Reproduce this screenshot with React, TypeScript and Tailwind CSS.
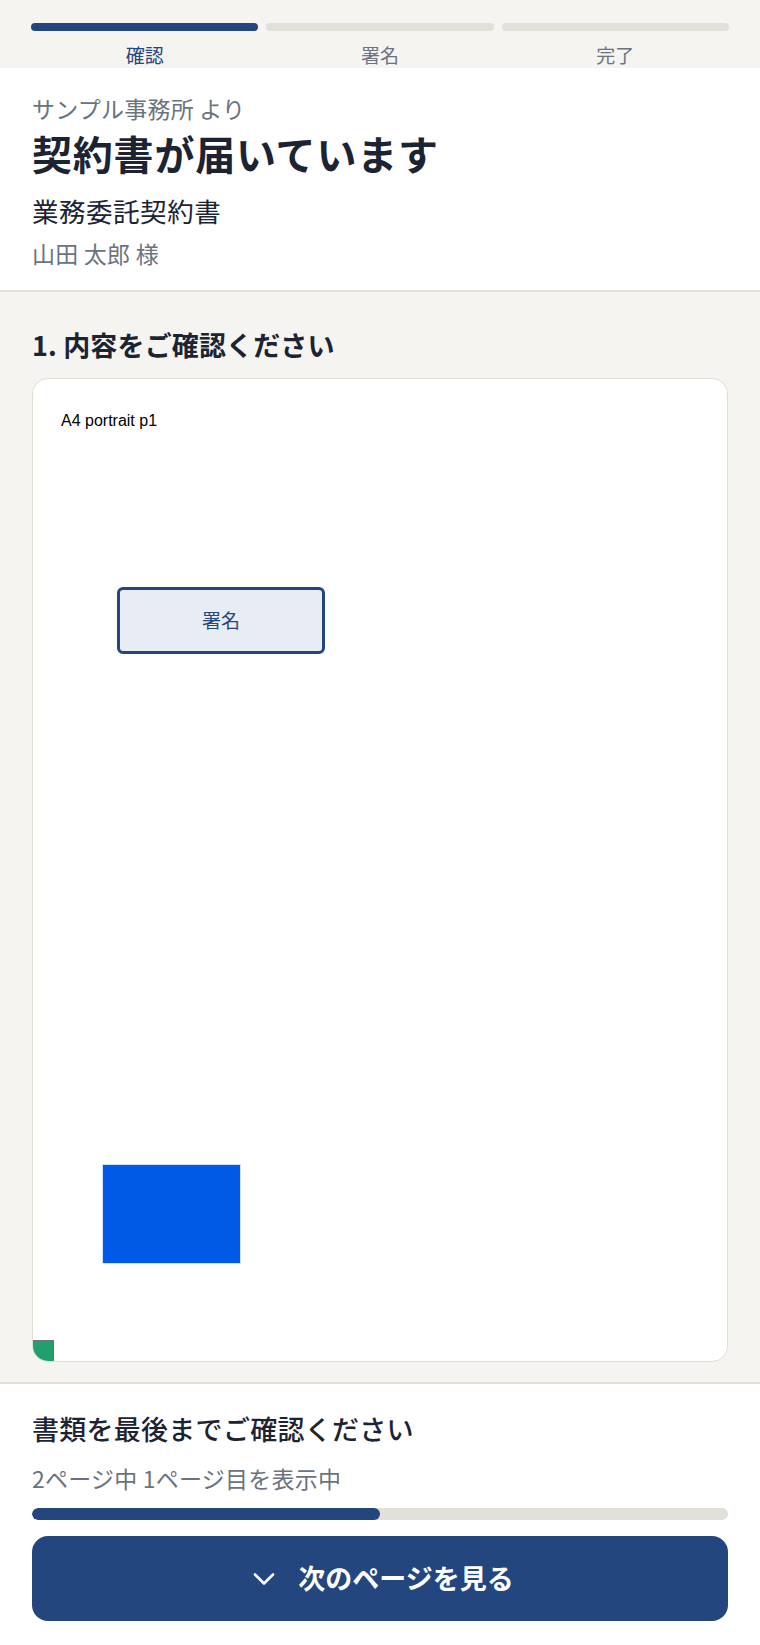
import React from "react";
import { ChevronDown } from "lucide-react";

const steps = [
  { label: "確認", active: true },
  { label: "署名", active: false },
  { label: "完了", active: false },
];

export default function App() {
  return (
    <div
      className="w-full min-h-screen bg-[#f5f4f0] text-[#1f2937]"
      style={{ fontFamily: '"Noto Sans CJK JP", "Noto Sans", sans-serif' }}
    >
      {/* Step progress */}
      <div className="h-[68px] px-[31px] pt-[23px]">
        <div className="grid grid-cols-3 gap-[8px]">
          {steps.map((s) => (
            <div key={s.label} className="flex flex-col items-center">
              <div
                className={
                  s.active
                    ? "h-[8px] w-full rounded-full bg-[#23467e]"
                    : "h-[8px] w-full rounded-full bg-[#e3e0da]"
                }
              />
              <div
                className={
                  s.active
                    ? "mt-[10px] text-[19px] leading-[28px] text-[#23467e]"
                    : "mt-[10px] text-[19px] leading-[28px] text-[#6b7280]"
                }
              >
                {s.label}
              </div>
            </div>
          ))}
        </div>
      </div>

      {/* Header */}
      <div className="bg-white px-8 pt-[23px] pb-[20px] border-b-2 border-[#e3e0da]">
        <div className="text-[23px] leading-[34px] tracking-[0.01em] text-[#6b7280]">サンプル事務所 より</div>
        <h1 className="mt-[2px] text-[40px] leading-[52px] tracking-[0.02em] font-bold text-[#1c2433]">
          契約書が届いています
        </h1>
        <div className="mt-[12px] text-[26.5px] leading-[40px] tracking-[0.02em] text-[#1c2433]">業務委託契約書</div>
        <div className="mt-[5px] text-[23px] leading-[34px] tracking-[0.01em] text-[#6b7280]">山田 太郎 様</div>
      </div>

      {/* Section */}
      <div className="px-8 pt-[33px] pb-[20px]">
        <h2 className="text-[27px] leading-[40px] tracking-[0.005em] font-bold text-[#1c2433]">1. 内容をご確認ください</h2>
        <div className="mt-[13px] relative h-[984px] rounded-[16px] border-[1.5px] border-[#e2ded6] bg-white overflow-hidden">
          <div
            className="absolute left-[28px] top-[33px] text-[16px] leading-[18px] text-black"
            style={{ fontFamily: '"Liberation Sans", Arial, sans-serif' }}
          >
            A4 portrait p1
          </div>
          <div className="absolute left-[84px] top-[208px] w-[208px] h-[67px] rounded-[6px] border-[3px] border-[#23467e] bg-[#e8ecf4] flex items-center justify-center text-[19px] text-[#23467e]">
            署名
          </div>
          <div className="absolute left-[69px] top-[785px] w-[139px] h-[100px] bg-[#005ae6] border border-[#cfe0fb]" />
          <div className="absolute left-0 bottom-0 w-[21px] h-[21px] bg-[#22a06b] border-t border-r border-[#6b7280]" />
        </div>
      </div>

      {/* Footer */}
      <div className="bg-white border-t-2 border-[#e3e0da] px-8 pt-[25px] pb-[24px]">
        <div className="text-[27px] leading-[40px] tracking-[0.01em] font-medium text-[#1c2433]">書類を最後までご確認ください</div>
        <div className="mt-[12px] text-[23px] leading-[34px] tracking-[0.01em] text-[#6b7280]">2ページ中 1ページ目を表示中</div>
        <div className="mt-[13px] h-[12px] w-full rounded-full bg-[#e3e0da] overflow-hidden">
          <div className="h-full rounded-full bg-[#23467e]" style={{ width: "50%" }} />
        </div>
        <button className="mt-[16px] w-full h-[85px] rounded-[16px] bg-[#23467e] text-white flex items-center justify-center gap-[16px]">
          <ChevronDown size={36} strokeWidth={1.75} />
          <span className="text-[27px] font-bold">次のページを見る</span>
        </button>
      </div>
    </div>
  );
}
